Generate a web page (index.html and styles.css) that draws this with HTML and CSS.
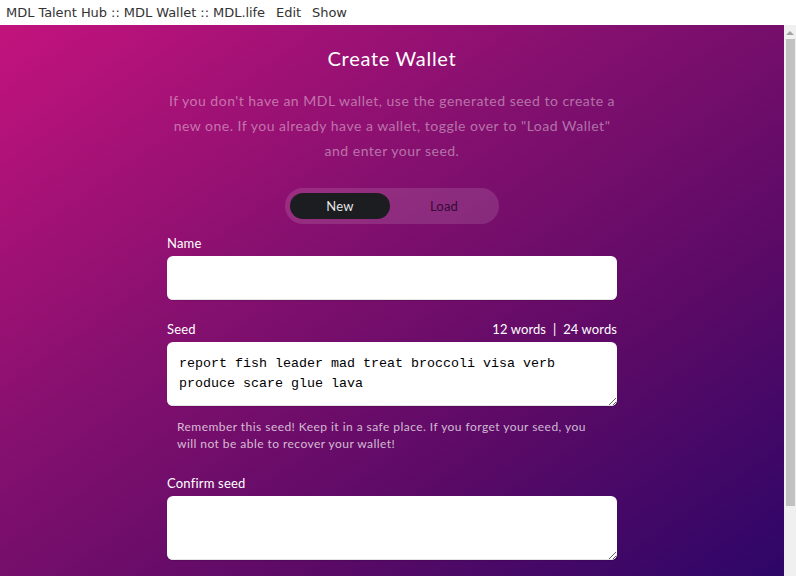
FILE: index.html
```html
<!DOCTYPE html>
<html lang="en">
<head>
<meta charset="utf-8">
<title>MDL Wallet</title>
<link rel="stylesheet" href="styles.css">
</head>
<body>
<div class="window">
  <nav class="menubar">
    <span class="menu-item">MDL Talent Hub :: MDL Wallet :: MDL.life</span>
    <span class="menu-item">Edit</span>
    <span class="menu-item">Show</span>
  </nav>
  <div class="viewport">
    <main class="page">
      <section class="panel">
        <h1 class="title">Create Wallet</h1>
        <p class="intro">If you don't have an MDL wallet, use the generated seed to create a new one. If you already have a wallet, toggle over to "Load Wallet" and enter your seed.</p>
        <div class="toggle">
          <span class="toggle-opt active">New</span>
          <span class="toggle-opt">Load</span>
        </div>
        <div class="field">
          <div class="label-row"><label class="label">Name</label></div>
          <input class="input" type="text">
        </div>
        <div class="field">
          <div class="label-row"><label class="label">Seed</label><span class="words">12 words &nbsp;|&nbsp; 24 words</span></div>
          <textarea class="textarea" readonly>report fish leader mad treat broccoli visa verb produce scare glue lava</textarea>
          <p class="hint">Remember this seed! Keep it in a safe place. If you forget your seed, you will not be able to recover your wallet!</p>
        </div>
        <div class="field">
          <div class="label-row"><label class="label">Confirm seed</label></div>
          <textarea class="textarea"></textarea>
        </div>
      </section>
    </main>
    <div class="scrollbar">
      <div class="sb-up"></div>
      <div class="sb-thumb"></div>
    </div>
  </div>
</div>
</body>
</html>
```

FILE: styles.css
```css
* { box-sizing: border-box; }
html, body { margin: 0; padding: 0; }
body { width: 796px; height: 576px; overflow: hidden; font-family: "Lato", "Open Sans", sans-serif; }

.window { display: flex; flex-direction: column; height: 576px; }

.menubar {
  height: 25px;
  flex: none;
  display: flex;
  align-items: center;
  gap: 11px;
  padding: 0 6px;
  background: #ffffff;
  font-family: "DejaVu Sans", sans-serif;
  font-size: 13px;
  letter-spacing: -0.05px;
  color: #333333;
}

.viewport { flex: 1; display: flex; overflow: hidden; }

.page {
  flex: 1;
  overflow: hidden;
  background: linear-gradient(to bottom right, #c3137d 0%, #86106f 38%, #5a0a66 70%, #2d0668 100%);
  display: flex;
  justify-content: center;
}

.panel { width: 450px; padding-top: 21px; display: flex; flex-direction: column; }

.title {
  margin: 0;
  text-align: center;
  font-size: 20px;
  line-height: 24px;
  font-weight: 400;
  color: #ffffff;
  letter-spacing: 0.7px;
}

.intro {
  margin: 18px 0 0;
  text-align: center;
  font-size: 14px;
  line-height: 25px;
  color: rgba(255, 255, 255, 0.42);
  letter-spacing: 0.5px;
}

.toggle {
  align-self: center;
  margin-top: 25px;
  width: 214px;
  height: 36px;
  padding: 5px;
  border-radius: 18px;
  background: rgba(255, 255, 255, 0.12);
  display: grid;
  grid-template-columns: 100px 1fr;
}

.toggle-opt {
  display: flex;
  align-items: center;
  justify-content: center;
  font-size: 13px;
  color: rgba(25, 0, 30, 0.8);
  border-radius: 13px;
  letter-spacing: 0.2px;
}
.toggle-opt + .toggle-opt { padding-left: 4px; }
.toggle-opt.active { background: #1b1d20; color: #e6e6e6; }

.field { display: flex; flex-direction: column; margin-top: 11px; }
.field + .field { margin-top: 21px; }

.label-row {
  display: flex;
  justify-content: space-between;
  align-items: center;
  height: 16px;
  margin-bottom: 5px;
}
.label { font-size: 13px; color: #ffffff; letter-spacing: 0.2px; }
.words { font-size: 13px; color: #ffffff; letter-spacing: 0.1px; }

.input {
  height: 44px;
  border: none;
  border-radius: 6px;
  background: #ffffff;
  box-shadow: 0 1px 1px rgba(0, 0, 0, 0.12), inset 0 -1px 0 #e6e6e6;
  outline: none;
}

.textarea {
  height: 64px;
  border: none;
  border-radius: 6px;
  background: #ffffff;
  box-shadow: 0 1px 1px rgba(0, 0, 0, 0.12), inset 0 -1px 0 #e6e6e6;
  padding: 12px 12px 10px;
  font-family: "Liberation Mono", monospace;
  font-size: 13.33px;
  line-height: 20px;
  color: #000000;
  outline: none;
  resize: vertical;
}

.hint {
  margin: 12px 0 2px;
  padding: 0 20px 0 10px;
  font-size: 12px;
  line-height: 17px;
  color: rgba(255, 255, 255, 0.72);
  letter-spacing: 0.45px;
}

.scrollbar {
  width: 12px;
  flex: none;
  background: #f0f0f0;
  display: flex;
  flex-direction: column;
  align-items: flex-end;
  padding-right: 1px;
}
.sb-up {
  width: 0;
  height: 0;
  margin: 6px 1px 0 0;
  border-left: 4px solid transparent;
  border-right: 4px solid transparent;
  border-bottom: 4px solid #a3a3a3;
}
.sb-thumb {
  width: 9px;
  height: 467px;
  margin-top: 4px;
  background: #c1c1c1;
}
```
